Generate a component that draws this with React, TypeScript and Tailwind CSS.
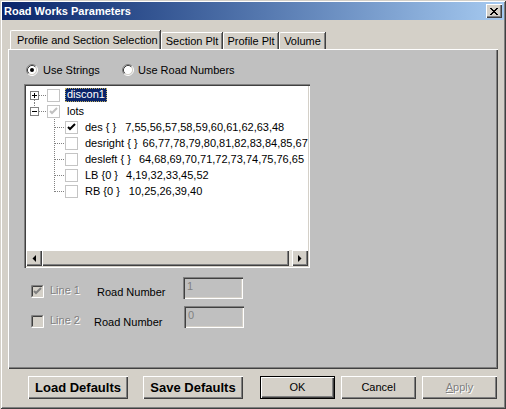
import React from "react";

const raised =
  "shadow-[inset_1px_1px_#ffffff,inset_-1px_-1px_#404040,inset_-2px_-2px_#808080]";
const sunken =
  "shadow-[inset_1px_1px_#808080,inset_2px_2px_#404040,inset_-1px_-1px_#ffffff,inset_-2px_-2px_#d4d0c8]";

function Radio({ checked }: { checked?: boolean }) {
  return (
    <svg width="12" height="12" viewBox="0 0 12 12" className="shrink-0">
      <circle cx="6" cy="6" r="4.5" fill="#ffffff" />
      <path d="M2.11 9.89 A5.5 5.5 0 0 1 9.89 2.11" fill="none" stroke="#808080" />
      <path d="M9.89 2.11 A5.5 5.5 0 0 1 2.11 9.89" fill="none" stroke="#ffffff" />
      <path d="M2.82 9.18 A4.5 4.5 0 0 1 9.18 2.82" fill="none" stroke="#404040" />
      <path d="M9.18 2.82 A4.5 4.5 0 0 1 2.82 9.18" fill="none" stroke="#d4d0c8" />
      {checked && <circle cx="6" cy="6" r="2" fill="#000000" />}
    </svg>
  );
}

function TreeCheck({ state }: { state: "off" | "on" | "gray" }) {
  return (
    <svg width="13" height="13" viewBox="0 0 13 13" className="shrink-0">
      <rect x="0.5" y="0.5" width="12" height="12" fill="#ffffff" stroke="#c4c4c4" />
      {state !== "off" && (
        <path
          d="M3 6 L5 8 L10 3"
          fill="none"
          strokeWidth="2"
          stroke={state === "on" ? "#000000" : "#c0c0c0"}
        />
      )}
    </svg>
  );
}

function SunkenCheck({ checked }: { checked?: boolean }) {
  return (
    <svg width="13" height="13" viewBox="0 0 13 13" className="shrink-0">
      <rect x="0" y="0" width="13" height="13" fill="#d4d0c8" />
      <path d="M0.5 12.5 V0.5 H12.5" fill="none" stroke="#808080" />
      <path d="M1.5 11.5 V1.5 H11.5" fill="none" stroke="#404040" />
      <path d="M0.5 12.5 H12.5 V0.5" fill="none" stroke="#ffffff" />
      <path d="M1.5 11.5 H11.5 V1.5" fill="none" stroke="#d4d0c8" />
      {checked && (
        <path d="M3 6 L5 8 L10 3" fill="none" strokeWidth="2" stroke="#808080" />
      )}
    </svg>
  );
}

function Expander({ open, first }: { open?: boolean; first?: boolean }) {
  return (
    <svg width="21" height="16" viewBox="0 0 21 16" className="shrink-0">
      {first ? (
        <path d="M8.5 13 V16" stroke="#808080" strokeDasharray="1 1" />
      ) : (
        <path d="M8.5 0 V4" stroke="#808080" strokeDasharray="1 1" />
      )}
      <path d="M13 8.5 H21" stroke="#808080" strokeDasharray="1 1" />
      <rect x="4.5" y="4.5" width="8" height="8" fill="#ffffff" stroke="#808080" />
      <path d="M6 8.5 H11" stroke="#000000" />
      {!open && <path d="M8.5 6 V11" stroke="#000000" />}
    </svg>
  );
}

function ChildLine({ last }: { last?: boolean }) {
  return (
    <svg width="39" height="16" viewBox="0 0 39 16" className="shrink-0">
      <path d={last ? "M28.5 0 V9" : "M28.5 0 V16"} stroke="#808080" strokeDasharray="1 1" />
      <path d="M29 8.5 H39" stroke="#808080" strokeDasharray="1 1" />
    </svg>
  );
}

const children = [
  { name: "des { }", nums: "7,55,56,57,58,59,60,61,62,63,48", gap: "ml-[9px]", on: true },
  { name: "desright { }", nums: "66,77,78,79,80,81,82,83,84,85,67", gap: "ml-[5px]" },
  { name: "desleft { }", nums: "64,68,69,70,71,72,73,74,75,76,65", gap: "ml-[8px]" },
  { name: "LB {0 }", nums: "4,19,32,33,45,52", gap: "ml-[8px]" },
  { name: "RB {0 }", nums: "10,25,26,39,40", gap: "ml-[9px]" },
];

function ScrollArrow({ dir }: { dir: "left" | "right" }) {
  return (
    <div className={`w-[16px] h-[16px] bg-[#d4d0c8] flex items-center justify-center ${raised}`}>
      <svg width="4" height="7" viewBox="0 0 4 7">
        <path d={dir === "left" ? "M4 0 V7 L0.5 3.5 Z" : "M0 0 V7 L3.5 3.5 Z"} fill="#000000" />
      </svg>
    </div>
  );
}

function Tree() {
  return (
    <div className={`ml-[16px] mt-[8px] w-[286px] h-[184px] bg-white p-[2px] flex flex-col ${sunken}`}>
      <div className="flex-1 pt-[1px] overflow-hidden whitespace-nowrap text-black">
        <div className="flex items-center h-[16px]">
          <Expander first />
          <TreeCheck state="off" />
          <span className="ml-[5px] px-[2px] h-[14px] leading-[13px] bg-[#0a246a] text-white outline outline-1 outline-dotted outline-[#c0b060] -outline-offset-1">
            discon1
          </span>
        </div>
        <div className="flex items-center h-[16px]">
          <Expander open />
          <TreeCheck state="gray" />
          <span className="ml-[5px] px-[2px] leading-[13px]">lots</span>
        </div>
        {children.map((c, i) => (
          <div key={c.name} className="flex items-center h-[16px]">
            <ChildLine last={i === children.length - 1} />
            <TreeCheck state={c.on ? "on" : "off"} />
            <span className="ml-[5px] px-[2px] leading-[13px] whitespace-pre">
              {c.name}
              <span className={c.gap}>{c.nums}</span>
            </span>
          </div>
        ))}
      </div>
      <div className="flex h-[16px] bg-[#e6e3dc]">
        <ScrollArrow dir="left" />
        <div className={`w-[247px] bg-[#d4d0c8] ${raised}`} />
        <div className="flex-1" />
        <ScrollArrow dir="right" />
      </div>
    </div>
  );
}

function LineRow({
  label,
  checked,
  value,
  clusterW,
  rnW,
  first,
}: {
  label: string;
  checked?: boolean;
  value: string;
  clusterW: string;
  rnW: string;
  first?: boolean;
}) {
  return (
    <div className={`flex items-start h-[22px] pl-[23px] ${first ? "mt-[9px]" : "mt-[7px]"}`}>
      <div className={`flex items-start ${clusterW}`}>
        <div className={first ? "mt-[8px]" : "mt-[9px]"}>
          <SunkenCheck checked={checked} />
        </div>
        <span
          className={`ml-[6px] leading-[13px] text-[#808080] [text-shadow:1px_1px_0_#ffffff] ${
            first ? "mt-[7px]" : "mt-[8px]"
          }`}
        >
          {label}
        </span>
      </div>
      <span className={`leading-[13px] text-black ${rnW} ${first ? "mt-[9px]" : "mt-[10px]"}`}>
        Road Number
      </span>
      <div className={`w-[60px] h-[22px] bg-[#c0c0c0] pl-[4px] pt-[3px] leading-[13px] text-[#808080] ${sunken}`}>
        {value}
      </div>
    </div>
  );
}

function Button({
  children,
  w,
  bold,
  def,
  disabled,
}: {
  children: React.ReactNode;
  w: string;
  bold?: boolean;
  def?: boolean;
  disabled?: boolean;
}) {
  return (
    <div
      className={`${w} h-[23px] bg-[#d4d0c8] flex items-center justify-center ${
        def ? "border border-black" : ""
      } ${bold ? "text-[13px] font-bold" : "text-[11px]"} ${
        disabled ? "text-[#808080] [text-shadow:1px_1px_0_#ffffff]" : "text-black"
      }`}
    >
      <div className={`w-full h-full flex items-center justify-center ${raised}`}>{children}</div>
    </div>
  );
}

export default function App() {
  return (
    <div
      className="w-[506px] h-[409px] bg-[#d4d0c8] font-['Liberation_Sans',Arial,sans-serif] text-[11px] shadow-[inset_1px_1px_#d4d0c8,inset_-1px_-1px_#404040,inset_2px_2px_#ffffff,inset_-2px_-2px_#808080] pt-[2px] overflow-hidden"
    >
      <div className="mx-[2px] h-[18px] bg-linear-to-r from-[#0a246a] to-[#a6caf0] flex items-center justify-between pl-[2px] pr-[2px]">
        <span className="text-white font-bold text-[11px] leading-[13px]">Road Works Parameters</span>
        <div className={`w-[16px] h-[14px] bg-[#d4d0c8] flex items-center justify-center ${raised}`}>
          <svg width="8" height="7" viewBox="0 0 8 7">
            <path d="M0 0 L7 7 M1 0 L8 7 M7 0 L0 7 M8 0 L1 7" stroke="#000000" strokeWidth="1" />
          </svg>
        </div>
      </div>

      <div className="mt-[10px] ml-[8px] h-[19px] flex items-end pl-[2px]">
        <div className="w-[150px] h-[19px] bg-[#d4d0c8] border-l border-t border-white rounded-tl-[2px] shadow-[inset_-1px_0_#808080,1px_0_#404040] flex items-center pl-[6px] text-black leading-[13px]">
          Profile and Section Selection
        </div>
        {[
          ["Section Plt", "w-[61px]"],
          ["Profile Plt", "w-[55px]"],
          ["Volume", "w-[46px]"],
        ].map(([t, w]) => (
          <div
            key={t}
            className={`${w} ml-[1px] h-[17px] bg-[#d4d0c8] border-l border-t border-white rounded-tl-[2px] shadow-[inset_-1px_0_#808080,1px_0_#404040] flex items-center justify-center text-black leading-[13px]`}
          >
            {t}
          </div>
        ))}
      </div>

      <div className={`ml-[8px] w-[490px] h-[320px] bg-[#c0c0c0] pt-[15px] ${raised}`}>
        <div className="flex items-center h-[12px] pl-[18px] text-black">
          <div className="flex items-center w-[96px]">
            <Radio checked />
            <span className="ml-[5px] leading-[13px]">Use Strings</span>
          </div>
          <div className="flex items-center">
            <Radio />
            <span className="ml-[4px] leading-[13px]">Use Road Numbers</span>
          </div>
        </div>
        <Tree />
        <LineRow first label="Line 1" checked value="1" clusterW="w-[66px]" rnW="w-[86px]" />
        <LineRow label="Line 2" value="0" clusterW="w-[63px]" rnW="w-[90px]" />
      </div>

      <div className="mt-[7px] pl-[28px] flex">
        <Button w="w-[100px]" bold>
          Load Defaults
        </Button>
        <div className="ml-[15px]">
          <Button w="w-[100px]" bold>
            Save Defaults
          </Button>
        </div>
        <div className="ml-[17px]">
          <Button w="w-[75px]" def>
            OK
          </Button>
        </div>
        <div className="ml-[6px]">
          <Button w="w-[75px]">Cancel</Button>
        </div>
        <div className="ml-[6px]">
          <Button w="w-[75px]" disabled>
            <span>
              <span className="underline">A</span>pply
            </span>
          </Button>
        </div>
      </div>
    </div>
  );
}
